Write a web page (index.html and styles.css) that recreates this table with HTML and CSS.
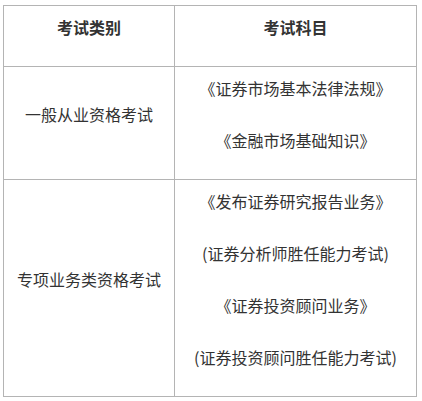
FILE: index.html
```html
<!DOCTYPE html>
<html lang="zh-CN">
<head>
<meta charset="utf-8">
<link rel="stylesheet" href="styles.css">
</head>
<body>
<table class="exam-table">
  <colgroup>
    <col class="col-type">
    <col class="col-subject">
  </colgroup>
  <thead>
    <tr>
      <th><p>考试类别</p></th>
      <th><p>考试科目</p></th>
    </tr>
  </thead>
  <tbody>
    <tr>
      <td><p>一般从业资格考试</p></td>
      <td>
        <p>《证券市场基本法律法规》</p>
        <p>《金融市场基础知识》</p>
      </td>
    </tr>
    <tr>
      <td><p>专项业务类资格考试</p></td>
      <td>
        <p>《发布证券研究报告业务》</p>
        <p>(证券分析师胜任能力考试)</p>
        <p>《证券投资顾问业务》</p>
        <p>(证券投资顾问胜任能力考试)</p>
      </td>
    </tr>
  </tbody>
</table>
</body>
</html>
```

FILE: styles.css
```css
html, body {
  margin: 0;
  padding: 0;
  background: #ffffff;
}

body {
  padding: 5px 0 0 3px;
  font-family: "Noto Sans CJK SC", "Microsoft YaHei", sans-serif;
  font-size: 16px;
  color: #333333;
}

.exam-table {
  border-collapse: collapse;
  table-layout: fixed;
  width: 414px;
}

.col-type {
  width: 171px;
}

.exam-table th,
.exam-table td {
  border: 1px solid #b4b4b4;
  padding: 4px;
  text-align: center;
  vertical-align: middle;
}

.exam-table th {
  font-weight: bold;
}

.exam-table p {
  margin: 0 0 17px;
  line-height: 35px;
  white-space: nowrap;
}
```
